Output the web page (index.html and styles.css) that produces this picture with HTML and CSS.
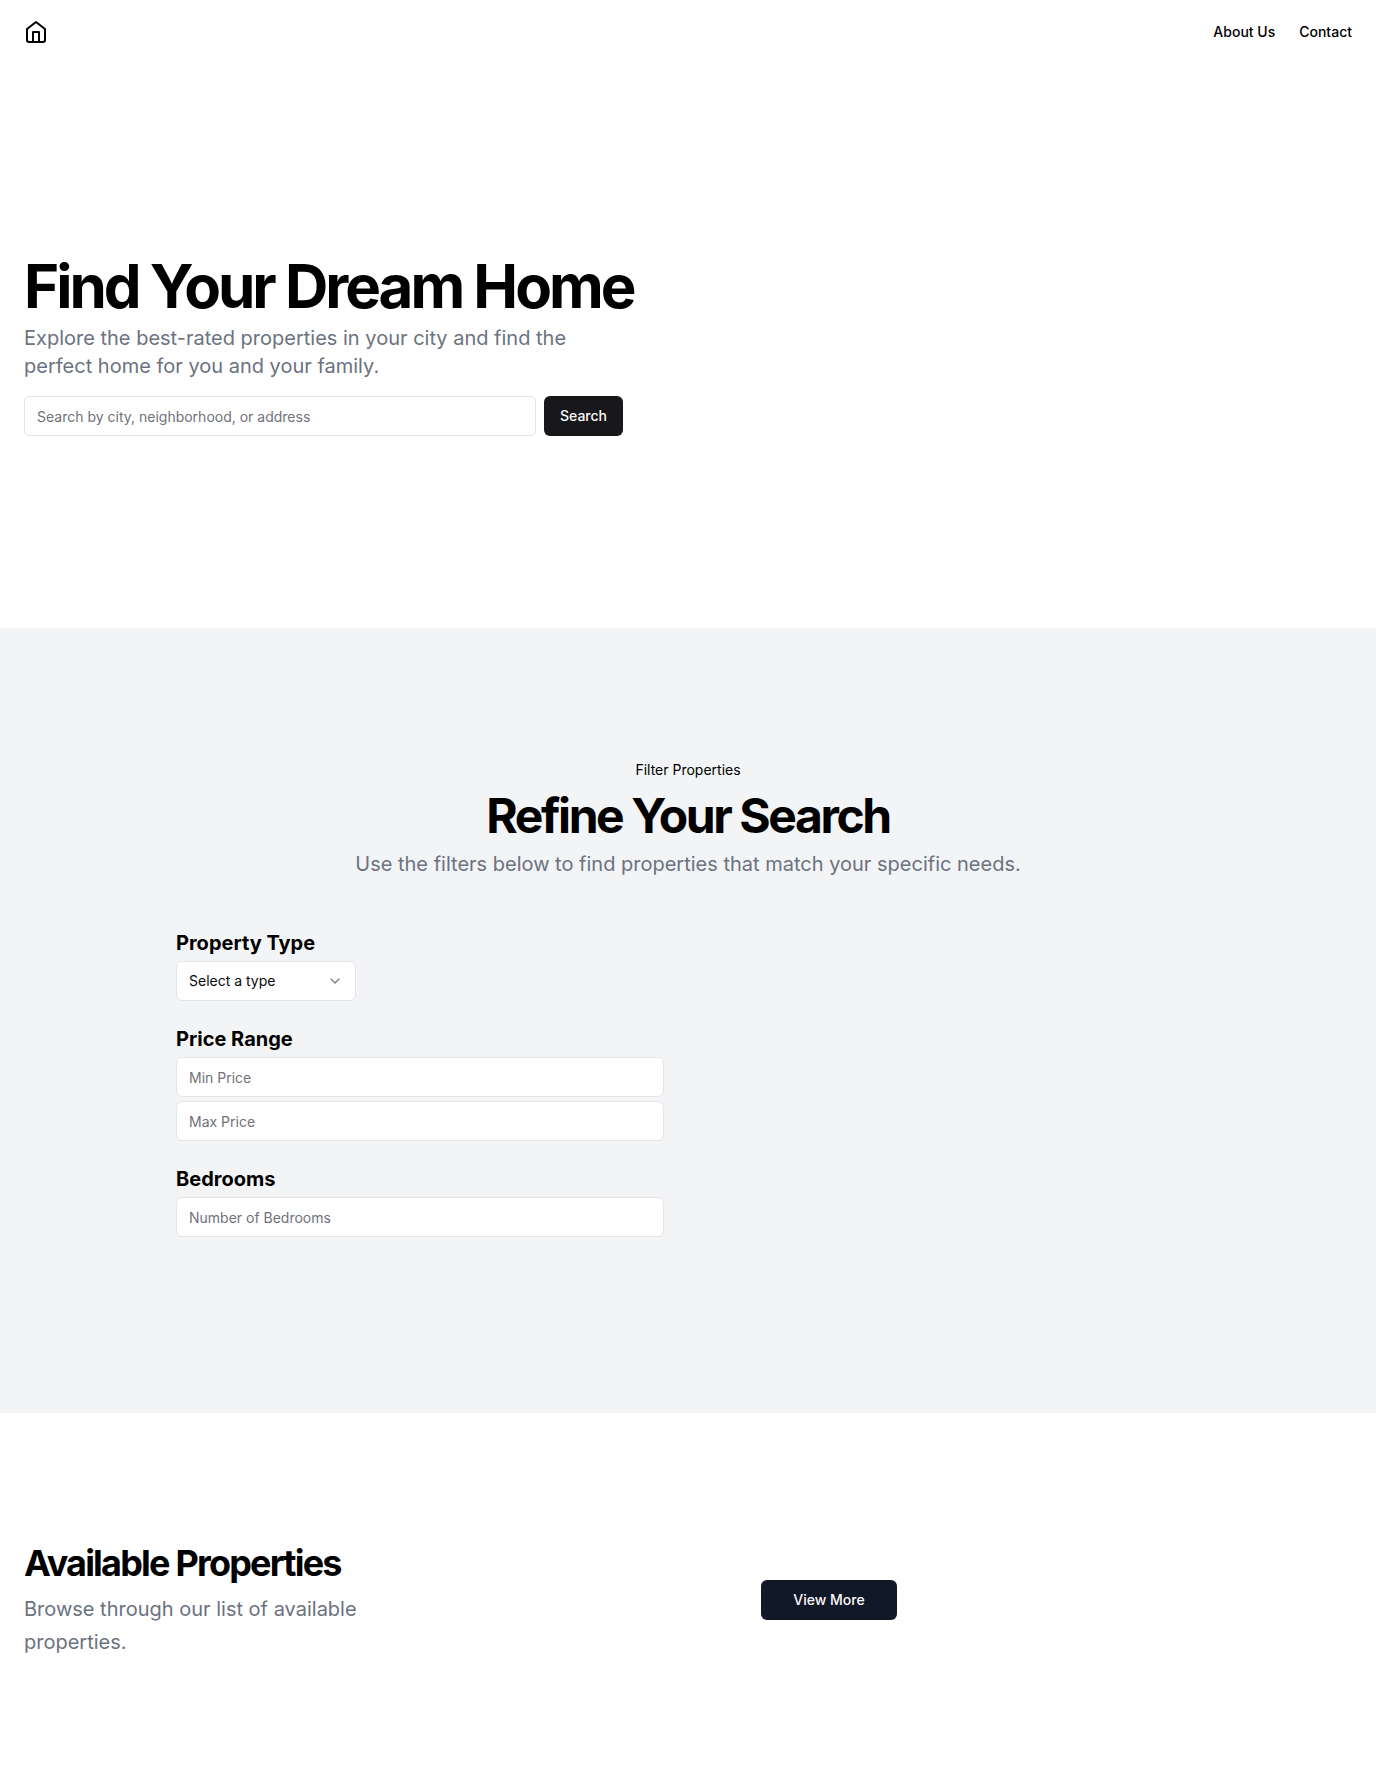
FILE: index.html
```html
<!DOCTYPE html>
<html lang="en">
<head>
  <meta charset="utf-8">
  <meta name="viewport" content="width=device-width, initial-scale=1">
  <title>Find Your Dream Home</title>
  <link rel="stylesheet" href="styles.css">
</head>
<body>
  <header class="site-header">
    <a class="logo" href="#" aria-label="Home">
      <svg class="logo-icon" viewBox="0 0 24 24" fill="none" stroke="currentColor" stroke-width="2" stroke-linecap="round" stroke-linejoin="round" aria-hidden="true">
        <path d="m3 9 9-7 9 7v11a2 2 0 0 1-2 2H5a2 2 0 0 1-2-2z"/>
        <polyline points="9 22 9 12 15 12 15 22"/>
      </svg>
    </a>
    <nav class="site-nav">
      <a class="nav-link" href="#about">About Us</a>
      <a class="nav-link" href="#contact">Contact</a>
    </nav>
  </header>

  <main>
    <section class="hero">
      <h1 class="hero-title">Find Your Dream Home</h1>
      <p class="hero-text">Explore the best-rated properties in your city and find the perfect home for you and your family.</p>
      <form class="search-form">
        <input class="field search-field" type="search" aria-label="Search properties" placeholder="Search by city, neighborhood, or address">
        <button class="button" type="submit">Search</button>
      </form>
    </section>

    <section class="filters">
      <div class="filters-head">
        <div class="eyebrow">Filter Properties</div>
        <h2 class="filters-title">Refine Your Search</h2>
        <p class="lead">Use the filters below to find properties that match your specific needs.</p>
      </div>
      <form class="filters-grid">
        <div class="filters-column">
          <div class="filter">
            <label class="filter-label" for="type">Property Type</label>
            <div class="select">
              <select class="field select-field" id="type">
                <option>Select a type</option>
                <option>House</option>
                <option>Apartment</option>
                <option>Condo</option>
              </select>
              <svg class="select-icon" viewBox="0 0 24 24" fill="none" stroke="currentColor" stroke-width="2" stroke-linecap="round" stroke-linejoin="round" aria-hidden="true">
                <path d="m6 9 6 6 6-6"/>
              </svg>
            </div>
          </div>
          <div class="filter">
            <label class="filter-label" for="min-price">Price Range</label>
            <input class="field" id="min-price" type="text" inputmode="numeric" placeholder="Min Price">
            <input class="field" type="text" inputmode="numeric" aria-label="Max Price" placeholder="Max Price">
          </div>
          <div class="filter">
            <label class="filter-label" for="bedrooms">Bedrooms</label>
            <input class="field" id="bedrooms" type="text" inputmode="numeric" placeholder="Number of Bedrooms">
          </div>
        </div>
      </form>
    </section>

    <section class="listings">
      <div class="listings-intro">
        <h2 class="listings-title">Available Properties</h2>
        <p class="lead">Browse through our list of available properties.</p>
      </div>
      <a class="button button-navy" href="#properties">View More</a>
    </section>
  </main>
</body>
</html>
```

FILE: styles.css
```css
*,
*::before,
*::after {
  box-sizing: border-box;
}

body {
  margin: 0;
  background: #fff;
  color: #000;
  font-family: Inter, "Liberation Sans", sans-serif;
  font-size: 16px;
  line-height: 24px;
}

h1,
h2,
p {
  margin: 0;
}

a {
  color: inherit;
  text-decoration: none;
}

/* Header */
.site-header {
  display: flex;
  align-items: center;
  justify-content: space-between;
  height: 64px;
  padding: 0 24px;
}

.logo-icon {
  display: block;
  width: 24px;
  height: 24px;
}

.site-nav {
  display: flex;
  gap: 24px;
}

.nav-link {
  font-size: 14px;
  font-weight: 500;
  line-height: 20px;
}

/* Controls */
.field {
  width: 100%;
  height: 40px;
  padding: 8px 12px;
  border: 1px solid #e4e4e7;
  border-radius: 6px;
  background: #fff;
  color: #09090b;
  font: inherit;
  font-size: 14px;
  line-height: 20px;
  appearance: none;
}

.field::placeholder {
  color: #71717a;
  opacity: 1;
}

.button {
  display: inline-flex;
  align-items: center;
  justify-content: center;
  height: 40px;
  padding: 0 16px;
  border: 0;
  border-radius: 6px;
  background: #18181b;
  color: #fafafa;
  font: inherit;
  font-size: 14px;
  font-weight: 500;
  line-height: 20px;
}

.button-navy {
  justify-self: start;
  padding: 0 32px;
  background: #111827;
}

.select {
  position: relative;
  width: 180px;
}

.select-field {
  display: block;
}

.select-icon {
  position: absolute;
  top: 12px;
  right: 13px;
  width: 16px;
  height: 16px;
  opacity: 0.5;
  pointer-events: none;
}

.lead {
  color: #6b7280;
  font-size: 20px;
  line-height: 33px;
}

/* Hero */
.hero {
  padding: 192px 24px;
}

.hero-title {
  font-size: 60px;
  font-weight: 700;
  line-height: 60px;
  letter-spacing: -0.05em;
}

.hero-text {
  max-width: 600px;
  margin-top: 8px;
  color: #6b7280;
  font-size: 20px;
  line-height: 28px;
}

.search-form {
  display: flex;
  gap: 8px;
  margin-top: 16px;
}

.search-field {
  max-width: 512px;
}

/* Filters */
.filters {
  padding: 128px 24px;
  background: #f3f4f6;
}

.filters-head {
  display: flex;
  flex-direction: column;
  align-items: center;
  gap: 8px;
  text-align: center;
}

.eyebrow {
  padding: 4px 12px;
  font-size: 14px;
  line-height: 20px;
}

.filters-title {
  font-size: 48px;
  font-weight: 700;
  line-height: 48px;
  letter-spacing: -0.05em;
}

.filters-grid {
  display: grid;
  grid-template-columns: 1fr 1fr;
  gap: 48px;
  max-width: 1024px;
  margin: 0 auto;
  padding: 48px 0;
}

.filters-column {
  display: flex;
  flex-direction: column;
  gap: 24px;
}

.filter {
  display: flex;
  flex-direction: column;
  gap: 4px;
}

.filter-label {
  font-size: 20px;
  font-weight: 700;
  line-height: 28px;
}

/* Listings */
.listings {
  display: grid;
  grid-template-columns: 7fr 6fr;
  align-items: center;
  gap: 48px;
  padding: 128px 24px;
}

.listings-intro {
  display: flex;
  flex-direction: column;
  gap: 8px;
  max-width: 400px;
}

.listings-title {
  font-size: 36px;
  font-weight: 700;
  line-height: 44px;
  letter-spacing: -0.05em;
}
```
